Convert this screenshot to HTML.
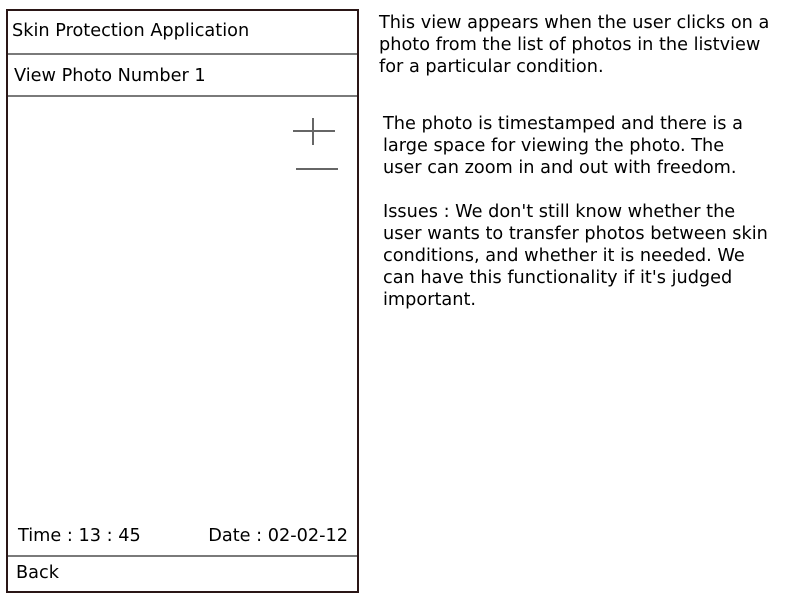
<!DOCTYPE html>
<html><head><style>
body{margin:0;width:800px;height:600px;background:#fff;position:relative;overflow:hidden;font-family:"DejaVu Sans","Liberation Sans",sans-serif;font-size:17.7px;color:#000}
.a{position:absolute;white-space:nowrap}
.l{position:absolute;background:#7a7a7a}
</style></head><body>
<div style="position:absolute;left:6px;top:9px;width:349px;height:580px;border:2px solid #2a1616"></div>
<div class="l" style="left:8px;top:53px;width:349px;height:2px"></div>
<div class="l" style="left:8px;top:95px;width:349px;height:2px"></div>
<div class="l" style="left:8px;top:555px;width:349px;height:2px"></div>
<div class="a" style="left:12px;top:20px;line-height:22px">Skin Protection Application</div>
<div class="a" style="left:14px;top:65px;line-height:22px">View Photo Number 1</div>
<div class="a" style="left:18px;top:525px;line-height:22px">Time : 13 : 45</div>
<div class="a" style="right:452px;top:525px;line-height:22px">Date : 02-02-12</div>
<div class="a" style="left:16px;top:562px;line-height:22px">Back</div>
<div class="l" style="left:293px;top:130px;width:42px;height:2px;background:#666"></div>
<div class="l" style="left:312px;top:118px;width:2px;height:27px;background:#666"></div>
<div class="l" style="left:296px;top:168px;width:42px;height:2px;background:#666"></div>
<div class="a" style="left:379px;top:12px;line-height:22px">This view appears when the user clicks on a<br>photo from the list of photos in the listview<br>for a particular condition.</div>
<div class="a" style="left:383px;top:113px;line-height:22px">The photo is timestamped and there is a<br>large space for viewing the photo. The<br>user can zoom in and out with freedom.<br><br>Issues : We don't still know whether the<br>user wants to transfer photos between skin<br>conditions, and whether it is needed. We<br>can have this functionality if it's judged<br>important.</div>
</body></html>
